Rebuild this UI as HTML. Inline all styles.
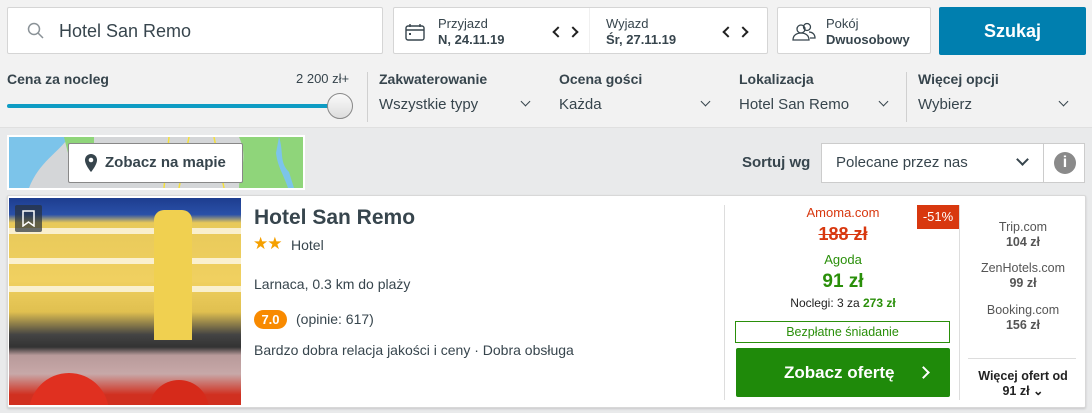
<!DOCTYPE html>
<html><head><meta charset="utf-8"><style>
*{box-sizing:border-box;margin:0;padding:0}
body{width:1092px;height:413px;overflow:hidden;background:#e9eaeb;font-family:"Liberation Sans",sans-serif;color:#37454d;position:relative}
.top{position:absolute;left:0;top:0;width:1092px;height:128px;background:#f2f2f2;border-bottom:1px solid #e0e0e0}
.box{position:absolute;background:#fff;border:1px solid #d5d5d5;border-radius:2px}
.abs{position:absolute}
.lbl{font-size:14px;font-weight:bold;color:#37454d}
.val{font-size:15px;color:#37454d}
.chev{position:absolute;width:7px;height:7px;border-right:1.6px solid #37454d;border-bottom:1.6px solid #37454d;transform:rotate(45deg)}
.sep{position:absolute;width:1px;background:#d0d0d0}
.ar{position:absolute;width:8px;height:8px;border-right:2px solid #222;border-bottom:2px solid #222}
</style></head><body>
<div class="top"></div>
<div class="box" style="left:7px;top:7px;width:376px;height:47px">
<svg class="abs" style="left:19px;top:14px" width="18" height="18" viewBox="0 0 18 18"><circle cx="7" cy="7" r="5.5" fill="none" stroke="#8a9297" stroke-width="1.5"/><line x1="11" y1="11" x2="16" y2="16" stroke="#8a9297" stroke-width="1.5"/></svg>
<div class="abs" style="left:51px;top:13px;font-size:18px;color:#37454d">Hotel San Remo</div></div>
<div class="box" style="left:393px;top:7px;width:375px;height:47px">
<svg class="abs" style="left:11px;top:15px" width="20" height="18" viewBox="0 0 20 18"><rect x="1" y="3" width="18" height="14" rx="2" fill="none" stroke="#37454d" stroke-width="1.4"/><line x1="1" y1="7" x2="19" y2="7" stroke="#37454d" stroke-width="1.4"/><line x1="5" y1="1" x2="5" y2="4" stroke="#37454d" stroke-width="1.4"/><line x1="15" y1="1" x2="15" y2="4" stroke="#37454d" stroke-width="1.4"/><rect x="4" y="10" width="2" height="2" fill="#37454d"/></svg>
<div class="abs" style="left:44px;top:8px;font-size:13px">Przyjazd</div>
<div class="abs" style="left:44px;top:24px;font-size:13px;font-weight:bold">N, 24.11.19</div>
<div class="ar" style="left:160px;top:20px;transform:rotate(135deg)"></div>
<div class="ar" style="left:175px;top:20px;transform:rotate(-45deg)"></div>
<div class="sep" style="left:195px;top:0;height:45px;background:#f0f0f0"></div>
<div class="abs" style="left:212px;top:8px;font-size:13px">Wyjazd</div>
<div class="abs" style="left:212px;top:24px;font-size:13px;font-weight:bold">Śr, 27.11.19</div>
<div class="ar" style="left:330px;top:20px;transform:rotate(135deg)"></div>
<div class="ar" style="left:345px;top:20px;transform:rotate(-45deg)"></div></div>
<div class="box" style="left:777px;top:7px;width:154px;height:47px">
<svg class="abs" style="left:14px;top:14px" width="24" height="20" viewBox="0 0 24 20"><circle cx="9" cy="7" r="4" fill="none" stroke="#37454d" stroke-width="1.3"/><path d="M1 18c0-5 4-7 8-7s8 2 8 7z" fill="none" stroke="#37454d" stroke-width="1.3"/><circle cx="15" cy="5" r="3.5" fill="none" stroke="#37454d" stroke-width="1.3"/><path d="M17 10c3 0 6 2 6 6h-5" fill="none" stroke="#37454d" stroke-width="1.3"/></svg>
<div class="abs" style="left:48px;top:8px;font-size:13px">Pokój</div>
<div class="abs" style="left:48px;top:24px;font-size:13px;font-weight:bold">Dwuosobowy</div></div>
<div class="abs" style="left:939px;top:7px;width:147px;height:48px;background:#007faf;border-radius:2px;color:#fff;font-size:18px;font-weight:bold;text-align:center;line-height:48px">Szukaj</div>

<div class="abs lbl" style="left:7px;top:71px">Cena za nocleg</div>
<div class="abs" style="left:296px;top:71px;font-size:13px">2 200 zł+</div>
<div class="abs" style="left:7px;top:104px;width:330px;height:4px;background:#0e9cc4;border-radius:2px"></div>
<div class="abs" style="left:327px;top:93px;width:26px;height:26px;border-radius:50%;background:linear-gradient(#fafafa,#ddd);border:1px solid #888"></div>
<div class="sep" style="left:367px;top:72px;height:50px"></div>
<div class="abs lbl" style="left:379px;top:71px">Zakwaterowanie</div>
<div class="abs val" style="left:379px;top:96px">Wszystkie typy</div><div class="chev" style="left:522px;top:98px"></div>
<div class="abs lbl" style="left:559px;top:71px">Ocena gości</div>
<div class="abs val" style="left:559px;top:96px">Każda</div><div class="chev" style="left:702px;top:98px"></div>
<div class="abs lbl" style="left:739px;top:71px">Lokalizacja</div>
<div class="abs val" style="left:739px;top:96px">Hotel San Remo</div><div class="chev" style="left:880px;top:98px"></div>
<div class="sep" style="left:906px;top:72px;height:50px"></div>
<div class="abs lbl" style="left:918px;top:71px">Więcej opcji</div>
<div class="abs val" style="left:918px;top:96px">Wybierz</div><div class="chev" style="left:1060px;top:98px"></div>

<div class="abs" style="left:7px;top:135px;width:298px;height:55px;background:#fff;padding:2px">
<svg width="294" height="51" viewBox="0 0 294 51"><rect width="294" height="51" fill="#d4d6d8"/><path d="M0 0h60c-10 15-30 25-40 51H0z" fill="#7cc4ea"/><path d="M55 0h30v20H60z" fill="#8fd57a"/><path d="M230 0h64v51h-64c0-15 10-30 0-51z" fill="#8fd57a"/><path d="M270 0c5 15 0 25 10 35l5 16h-6c-5-15-10-20-12-35z" fill="#7cc4ea"/><path d="M180 0l-10 51M160 0l-5 51M205 0l10 51" stroke="#f5e03a" stroke-width="1.5"/></svg></div>
<div class="abs" style="left:68px;top:143px;width:175px;height:40px;background:#fff;border:1px solid #888;border-radius:2px">
<svg class="abs" style="left:15px;top:9px" width="14" height="20" viewBox="0 0 14 20"><path d="M7 1a6 6 0 0 0-6 6c0 5 6 12 6 12s6-7 6-12a6 6 0 0 0-6-6z" fill="#37454d"/><circle cx="7" cy="7" r="2.3" fill="#fff"/></svg>
<div class="abs" style="left:36px;top:10px;font-size:15px;font-weight:bold">Zobacz na mapie</div></div>
<div class="abs lbl" style="left:742px;top:154px;font-size:15px">Sortuj wg</div>
<div class="abs" style="left:821px;top:143px;width:264px;height:40px;background:#fff;border:1px solid #ccc"></div>
<div class="abs val" style="left:836px;top:154px">Polecane przez nas</div><div class="chev" style="left:1018px;top:155px;width:9px;height:9px;border-width:2px"></div>
<div class="sep" style="left:1043px;top:143px;height:40px;background:#ccc"></div>
<div class="abs" style="left:1054px;top:152px;width:22px;height:22px;border-radius:50%;background:#8a8a8a;color:#fff;font-weight:bold;text-align:center;font-size:16px;line-height:22px">i</div>

<div class="abs" style="left:7px;top:195px;width:1079px;height:213px;background:#fff;border:1px solid #d8d8d8;border-radius:2px;box-shadow:0 1px 2px rgba(0,0,0,.15)"></div>
<div class="abs" style="left:9px;top:198px;width:232px;height:207px;background:linear-gradient(180deg,#1d3d8f 0%,#2a50a8 8%,#e8c95a 12%,#f0d060 40%,#e0c050 55%,#444 66%,#333 72%,#b89a9a 76%,#c7a8a8 85%,#d03020 95%);overflow:hidden">
<div class="abs" style="left:0;top:30px;width:232px;height:6px;background:#fff;opacity:.7"></div>
<div class="abs" style="left:0;top:60px;width:232px;height:6px;background:#fff;opacity:.7"></div>
<div class="abs" style="left:0;top:88px;width:232px;height:6px;background:#fff;opacity:.7"></div>
<div class="abs" style="left:145px;top:12px;width:38px;height:130px;background:#f0d050;border-radius:10px 10px 0 0"></div>
<div class="abs" style="left:20px;top:175px;width:80px;height:40px;background:#e03020;border-radius:40px 40px 0 0"></div>
<div class="abs" style="left:140px;top:182px;width:60px;height:30px;background:#d62a1a;border-radius:30px 30px 0 0"></div>
<div class="abs" style="left:6px;top:7px;width:27px;height:27px;background:rgba(40,50,60,.7);border-radius:2px">
<svg class="abs" style="left:7px;top:5px" width="13" height="17" viewBox="0 0 13 17"><path d="M1 1h11v15l-5.5-4-5.5 4z" fill="none" stroke="#fff" stroke-width="1.5"/></svg></div></div>
<div class="abs" style="left:254px;top:206px;font-size:21px;font-weight:bold">Hotel San Remo</div>
<div class="abs" style="left:253px;top:234px;font-size:17px;color:#f5a000;letter-spacing:-1px">★★</div>
<div class="abs" style="left:291px;top:237px;font-size:14px">Hotel</div>
<div class="abs" style="left:254px;top:276px;font-size:14px">Larnaca, 0.3 km do plaży</div>
<div class="abs" style="left:254px;top:310px;width:33px;height:19px;background:#f88a00;border-radius:10px;color:#fff;font-weight:bold;font-size:13px;text-align:center;line-height:19px">7.0</div>
<div class="abs" style="left:296px;top:311px;font-size:14px">(opinie: 617)</div>
<div class="abs" style="left:254px;top:342px;font-size:14px">Bardzo dobra relacja jakości i ceny · Dobra obsługa</div>

<div class="sep" style="left:724px;top:205px;height:195px;background:#ddd"></div>
<div class="abs" style="left:736px;top:205px;width:214px;text-align:center;color:#d8380f;font-size:13px">Amoma.com</div>
<div class="abs" style="left:736px;top:224px;width:214px;text-align:center;color:#d8380f;font-size:18px;font-weight:bold"><span style="text-decoration:line-through">188 zł</span></div>
<div class="abs" style="left:917px;top:205px;width:42px;height:24px;background:#d8380f;color:#fff;font-size:13px;text-align:center;line-height:24px">-51%</div>
<div class="abs" style="left:736px;top:252px;width:214px;text-align:center;color:#2a8f0a;font-size:13px">Agoda</div>
<div class="abs" style="left:736px;top:271px;width:214px;text-align:center;color:#2a8f0a;font-size:19px;font-weight:bold">91 zł</div>
<div class="abs" style="left:736px;top:296px;width:214px;text-align:center;font-size:12px;color:#222">Noclegi: 3 za <b style="color:#2a8f0a">273 zł</b></div>
<div class="abs" style="left:735px;top:321px;width:215px;height:22px;border:1px solid #2a8f0a;color:#2a8f0a;font-size:12.5px;text-align:center;line-height:20px">Bezpłatne śniadanie</div>
<div class="abs" style="left:736px;top:348px;width:214px;height:49px;background:#1f8a0a;border-radius:2px;color:#fff;font-size:17px;font-weight:bold;line-height:49px;padding-left:48px">Zobacz ofertę</div>
<div class="chev" style="left:919px;top:368px;width:9px;height:9px;border-color:#fff;border-width:2px;transform:rotate(-45deg)"></div>
<div class="sep" style="left:959px;top:205px;height:195px;background:#ddd"></div>
<div style="position:absolute;left:968px;top:220px;width:110px;text-align:center;font-size:12.5px;color:#555;line-height:15px">Trip.com<br><b>104 zł</b></div>
<div style="position:absolute;left:968px;top:261px;width:110px;text-align:center;font-size:12.5px;color:#555;line-height:15px">ZenHotels.com<br><b>99 zł</b></div>
<div style="position:absolute;left:968px;top:303px;width:110px;text-align:center;font-size:12.5px;color:#555;line-height:15px">Booking.com<br><b>156 zł</b></div>
<div class="abs" style="left:968px;top:358px;width:108px;height:1px;background:#ddd"></div>
<div style="position:absolute;left:968px;top:369px;width:110px;text-align:center;font-size:12.5px;font-weight:bold;color:#222;line-height:15px">Więcej ofert od<br>91 zł ⌄</div>
</body></html>
